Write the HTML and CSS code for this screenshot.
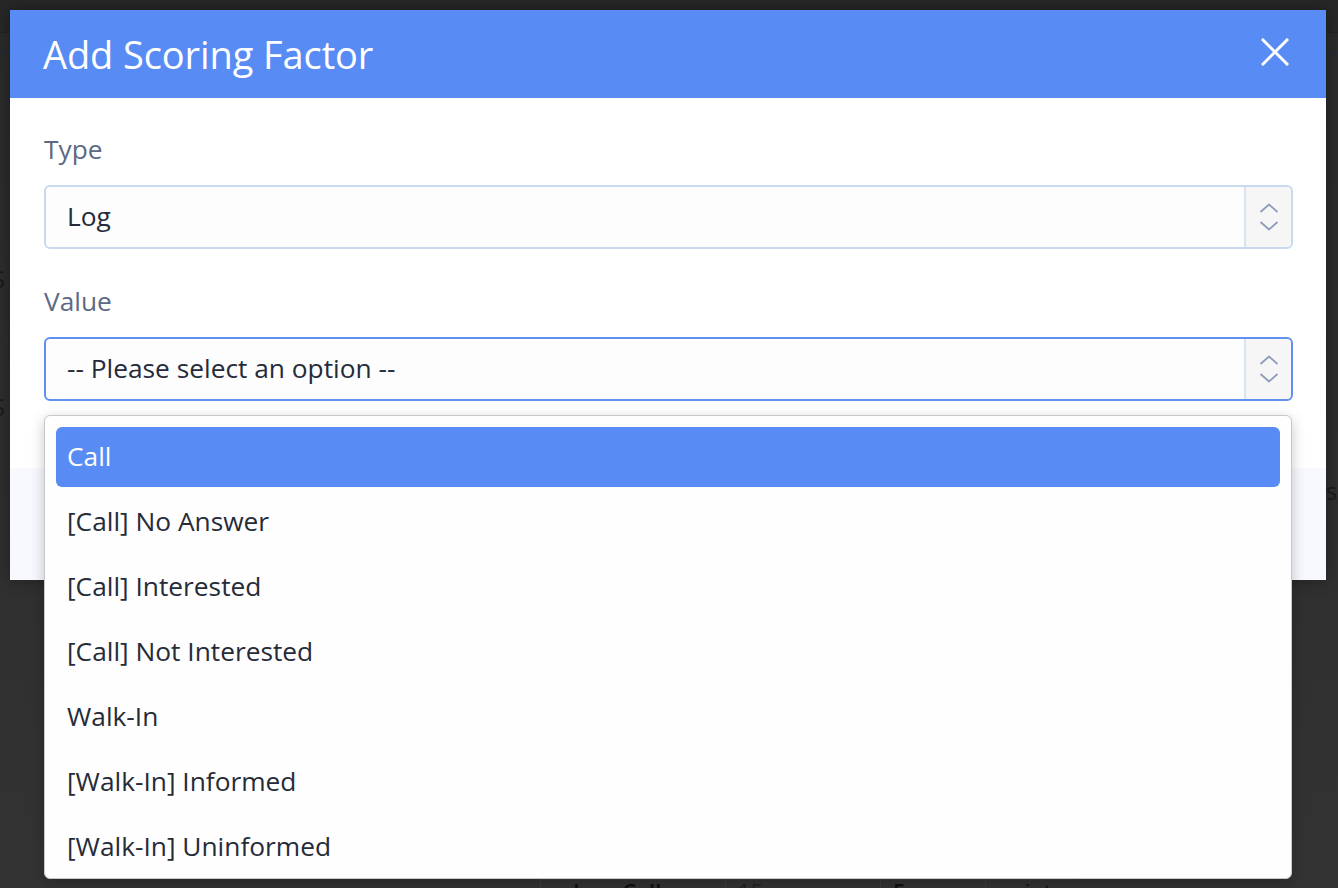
FILE: index.html
```html
<!DOCTYPE html>
<html>
<head>
<meta charset="utf-8">
<link rel="stylesheet" href="styles.css">
</head>
<body>
<div class="page">
  <div class="bg-topbar"></div>
  <div class="bg-line"></div>
  <div class="bg-text bg-s1">S</div>
  <div class="bg-text bg-s2">S</div>
  <div class="bg-text bg-s3">s</div>
  <div class="bg-row">
    <span class="bg-cell c1">Log: Call</span>
    <span class="bg-cell c2">15</span>
    <span class="bg-cell c3">5</span>
    <span class="bg-cell c4">points</span>
  </div>
</div>

<div class="modal">
  <div class="modal-header">
    <h1 class="modal-title">Add Scoring Factor</h1>
    <svg class="close" width="28" height="28" viewBox="0 0 28 28"><path d="M2 2 L26 26 M26 2 L2 26" stroke="#fff" stroke-width="3" stroke-linecap="square"/></svg>
  </div>
  <div class="modal-body">
    <label class="label">Type</label>
    <div class="select">
      <span class="select-text">Log</span>
      <span class="select-arrows">
        <svg width="20" height="30" viewBox="0 0 20 30"><path d="M1.5 10 L10 2.5 L18.5 10 M1.5 20 L10 27.5 L18.5 20" fill="none" stroke="#8d9dba" stroke-width="1.8"/></svg>
      </span>
    </div>
    <label class="label label-value">Value</label>
    <div class="select select-focus">
      <span class="select-text">-- Please select an option --</span>
      <span class="select-arrows">
        <svg width="20" height="30" viewBox="0 0 20 30"><path d="M1.5 10 L10 2.5 L18.5 10 M1.5 20 L10 27.5 L18.5 20" fill="none" stroke="#8d9dba" stroke-width="1.8"/></svg>
      </span>
    </div>
  </div>
  <div class="modal-footer"></div>
</div>

<div class="dropdown">
  <div class="option selected">Call</div>
  <div class="option">[Call] No Answer</div>
  <div class="option">[Call] Interested</div>
  <div class="option">[Call] Not Interested</div>
  <div class="option">Walk-In</div>
  <div class="option">[Walk-In] Informed</div>
  <div class="option">[Walk-In] Uninformed</div>
</div>
</body>
</html>
```
FILE: styles.css
```css
html, body {
  margin: 0;
  padding: 0;
}
body {
  width: 1338px;
  height: 888px;
  overflow: hidden;
  background: #2e2e2e;
  font-family: "Open Sans", "Noto Sans", sans-serif;
  position: relative;
}
.page {
  position: absolute;
  inset: 0;
  background: linear-gradient(180deg, #2a2a2a 0%, #2f2f2f 60%, #333 100%);
}
.bg-topbar {
  height: 32px;
  background: #272727;
  border-bottom: 1px solid #222;
}
.bg-line {
  margin-top: 19px;
  height: 2px;
  background: #262a36;
}
.bg-text {
  position: absolute;
  color: #1a1a1a;
  font-size: 24px;
}
.bg-s1 { left: -8px; top: 262px; }
.bg-s2 { left: -8px; top: 390px; }
.bg-s3 { left: 1326px; top: 474px; }
.bg-row {
  position: absolute;
  left: 540px;
  top: 879px;
  height: 30px;
  display: flex;
  color: #111;
  font-size: 22px;
  font-weight: 600;
  border-top: 1px solid #3a3a3a;
}
.bg-cell { padding: 0 12px; border-left: 1px solid #3b3b3b; line-height: 22px; }
.c1 { padding-left: 32px; width: 140px; }
.c2 { width: 130px; font-weight: 400; color: #222; }
.c3 { width: 80px; }
.c4 { font-weight: 400; }

.modal {
  position: absolute;
  left: 10px;
  top: 10px;
  width: 1316px;
  height: 570px;
  background: #fff;
  display: flex;
  flex-direction: column;
  box-shadow: 0 0 14px rgba(0,0,0,0.35);
}
.modal-header {
  height: 88px;
  background: #588bf3;
  display: flex;
  align-items: center;
  justify-content: space-between;
  padding: 0 37px 0 33px;
  flex-shrink: 0;
}
.modal-title {
  margin: 0;
  color: #fff;
  font-weight: 400;
  font-size: 38px;
  letter-spacing: -0.1px;
}
.close { margin-top: -4px; }
.modal-body {
  padding: 35px 33px 0 34px;
  height: 335px;
  display: flex;
  flex-direction: column;
  align-items: stretch;
}
.label {
  display: block;
  color: #5c6a84;
  font-size: 26.3px;
  line-height: 32px;
  margin-bottom: 20px;
}
.label-value { margin-top: 36px; }
.select {
  height: 64px;
  box-sizing: border-box;
  border: 2px solid #c9d9f0;
  border-radius: 6px;
  background: #fdfdfd;
  display: flex;
  align-items: center;
  justify-content: space-between;
}
.select-focus { border-color: #5f90f2; }
.select-text {
  padding-left: 21px;
  margin-top: -3px;
  color: #252b3a;
  font-size: 26.3px;
}
.select-arrows {
  width: 45px;
  height: 100%;
  border-left: 2px solid #d9e3f2;
  background: #f6f6f7;
  border-radius: 0 5px 5px 0;
  display: flex;
  align-items: center;
  justify-content: center;
}
.modal-footer {
  flex: 1;
  background: #f8f9fe;
}

.dropdown {
  position: absolute;
  left: 44px;
  top: 415px;
  width: 1248px;
  height: 464px;
  box-sizing: border-box;
  background: #fefefe;
  border: 1px solid #c8c8c8;
  border-radius: 6px;
  box-shadow: 0 4px 14px rgba(0,0,0,0.22);
  padding: 11px 11px 0;
  overflow: hidden;
  display: flex;
  flex-direction: column;
  gap: 5px;
}
.option {
  height: 60px;
  flex-shrink: 0;
  display: flex;
  align-items: center;
  padding-left: 11px;
  padding-bottom: 2px;
  box-sizing: border-box;
  color: #262b38;
  font-size: 26.3px;
  border-radius: 6px;
}
.option.selected {
  background: #588bf3;
  color: #fff;
}
```
